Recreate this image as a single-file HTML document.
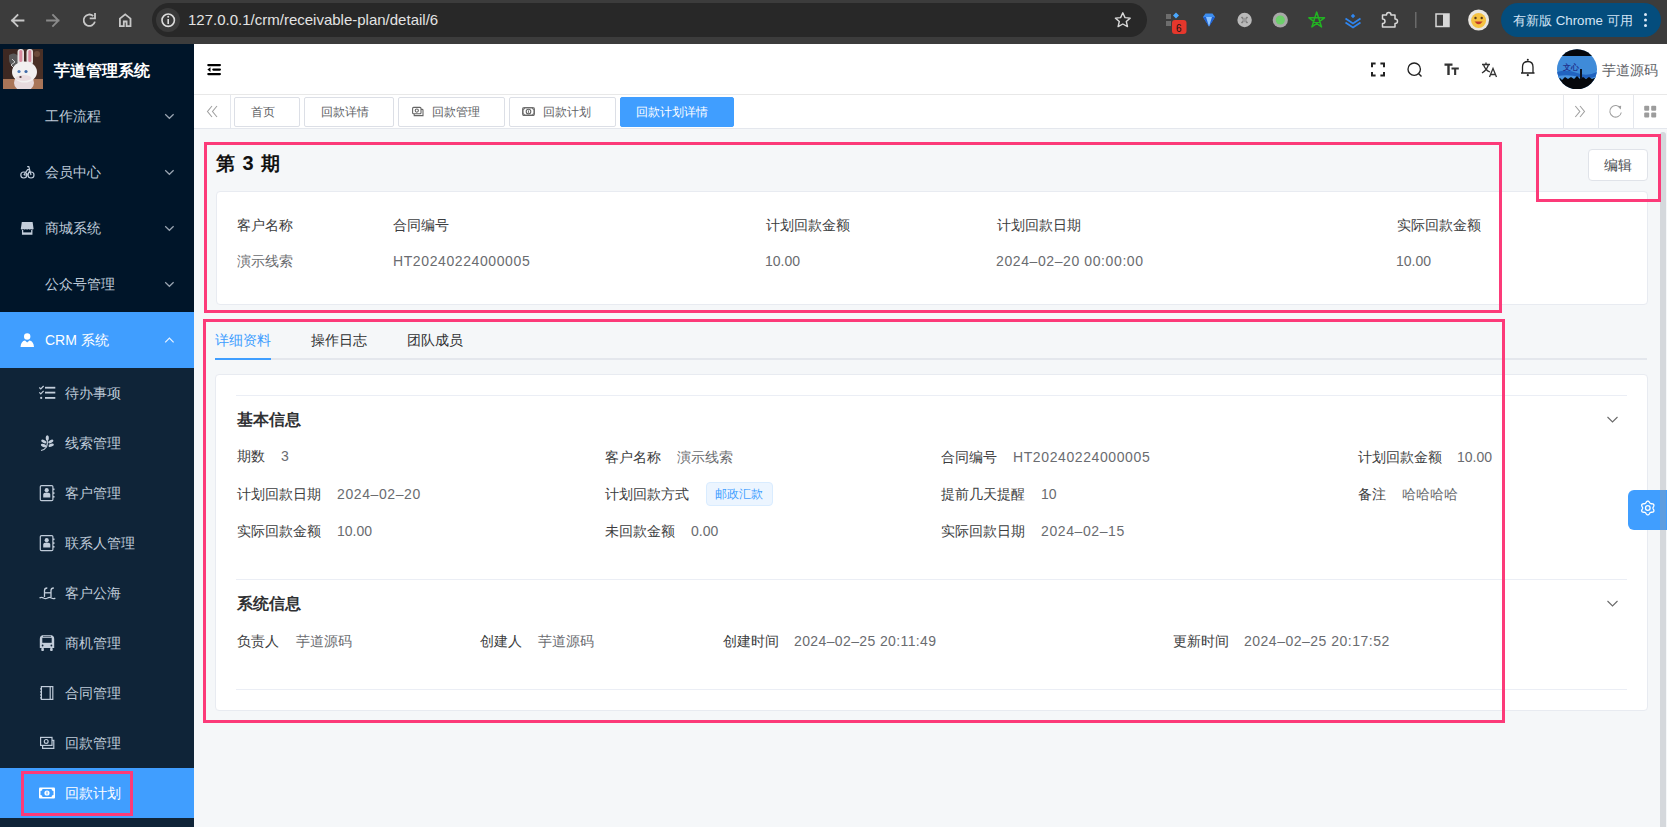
<!DOCTYPE html>
<html><head><meta charset="utf-8">
<style>
*{box-sizing:border-box;margin:0;padding:0}
html,body{width:1667px;height:827px;overflow:hidden}
body{position:relative;background:#f5f7f9;font-family:"Liberation Sans",sans-serif;font-size:14px;line-height:20px;color:#303133}
.a{position:absolute;white-space:nowrap}
svg{position:absolute;overflow:visible}
#chrome{left:0;top:0;width:1667px;height:44px;background:#3c3c3c}
#omni{left:152px;top:3px;width:995px;height:34px;border-radius:17px;background:#282828}
#side{left:0;top:44px;width:194px;height:783px;background:#001529}
#sub{left:0;top:368px;width:194px;height:459px;background:#0f2438}
#header{left:194px;top:44px;width:1473px;height:51px;background:#fff;border-bottom:1px solid #e8e8e8}
#tags{left:194px;top:95px;width:1473px;height:34px;background:#fff;border-bottom:1px solid #e4e7ed}
.pink{position:absolute;border:3px solid #fc3a79}
.card{position:absolute;background:#fff;border:1px solid #e8ebf1;border-radius:4px}
.mi{color:#bfcbd9}
.lbl{color:#3c3d40}
.val{color:#6a6c70}
.num{letter-spacing:0.6px}
.tag{position:absolute;top:97px;height:30px;border:1px solid #dcdfe6;border-radius:2px;background:#fff;color:#606266;font-size:12px}
</style></head><body>
<!-- browser chrome -->
<div id="chrome" class="a"></div>
<div id="omni" class="a"></div>
<div class="a" style="left:156px;top:8px;width:24px;height:24px;border-radius:12px;background:#3a3a3a"></div>
<svg style="left:0;top:0" width="1" height="1">
  <g fill="none" stroke="#c7c7c7" stroke-width="1.8" stroke-linecap="square">
    <path d="M12 20.5 H23.5 M17.5 15 L12 20.5 L17.5 26"/>
  </g>
  <g fill="none" stroke="#8a8a8a" stroke-width="1.8" stroke-linecap="square">
    <path d="M47 20.5 H58.5 M53 15 L58.5 20.5 L53 26"/>
  </g>
  <g fill="none" stroke="#c7c7c7" stroke-width="1.8">
    <path d="M94.9 21.6 A5.7 5.7 0 1 1 93.2 16"/>
    <path d="M90.6 18.4 H95 V14" stroke-linecap="square"/>
  </g>
  <g fill="none" stroke="#c7c7c7" stroke-width="1.8">
    <path d="M119.9 26.2 V18.6 L125.2 14.3 L130.5 18.6 V26.2 H126.6 V21.5 H123.8 V26.2 Z" stroke-linejoin="miter"/>
  </g>
  <g fill="none" stroke="#dcdcdc" stroke-width="1.6">
    <circle cx="168.2" cy="20.2" r="6.2"/>
    <path d="M168.2 19 V24"/>
  </g>
  <circle cx="168.2" cy="16.8" r="1" fill="#dcdcdc"/>
</svg>
<div class="a" style="left:188px;top:10px;font-size:15px;line-height:20px;color:#e3e3e3">127.0.0.1/crm/receivable-plan/detail/6</div>


<!-- chrome right -->
<svg style="left:0;top:0" width="1" height="1">
  <path d="M1122.8 12.8 L1125 17.6 L1130.2 18.1 L1126.3 21.5 L1127.5 26.6 L1122.8 24 L1118.1 26.6 L1119.3 21.5 L1115.4 18.1 L1120.6 17.6 Z" fill="none" stroke="#d8d8d8" stroke-width="1.4" stroke-linejoin="round"/>
  <!-- ext1 grid -->
  <g fill="#6d6d6d"><rect x="1166" y="14" width="5" height="5"/><rect x="1166" y="21" width="5" height="5"/><rect x="1173" y="21" width="5" height="5"/></g>
  <path d="M1176 12.5 L1179 15.5 L1176 18.5 L1173 15.5Z" fill="#4aa8ff"/>
  <rect x="1172" y="20" width="14.5" height="14" rx="3" fill="#e5372c"/>
  <text x="1176" y="31.5" font-size="10" font-family="Liberation Sans" fill="#111">6</text>
  <!-- diamond -->
  <path d="M1203 17 L1205.5 13.5 H1212.5 L1215 17 L1209 26.5Z" fill="#3d8ef0"/>
  <path d="M1203 17 H1215 L1209 26.5Z" fill="#1f5fcf"/>
  <path d="M1206 17 L1209 26.5 L1212 17" fill="#8cc4ff"/>
  <!-- gray circle w symbol -->
  <circle cx="1244.6" cy="20" r="7.2" fill="#b9b9b9"/>
  <path d="M1241.5 17 L1247.5 23 M1247.5 17 L1241.5 23" stroke="#7a7a7a" stroke-width="1.6"/>
  <circle cx="1244.6" cy="20" r="2.2" fill="#9a9a9a"/>
  <!-- gray circle green center -->
  <circle cx="1280.3" cy="20" r="7.6" fill="#a8a8a8"/>
  <circle cx="1280.3" cy="20" r="4.6" fill="#6ccf6a"/>
  <!-- green star -->
  <path d="M1316.70 12.10 L1321.52 26.93 L1308.90 17.77 L1324.50 17.77 L1311.88 26.93 L1316.70 12.10Z" fill="none" stroke="#22b322" stroke-width="1.5" stroke-linejoin="round"/>
  <!-- blue layers -->
  <g fill="none" stroke="#2f86f0" stroke-width="1.8">
    <path d="M1345.5 18.5 L1353 23.5 L1360.5 18.5"/>
    <path d="M1345.5 22.5 L1353 27.5 L1360.5 22.5"/>
  </g>
  <path d="M1350.8 16 L1353 13.8 L1355.2 16 L1353 18.2Z" fill="#2f86f0"/>
  <!-- puzzle -->
  <path d="M1382.5 15 H1386.5 Q1386.5 12.5 1388.8 12.5 Q1391 12.5 1391 15 H1395 V19 Q1397.5 19 1397.5 21.2 Q1397.5 23.5 1395 23.5 V27 H1382.5 V23.5 Q1385 23.5 1385 21.2 Q1385 19 1382.5 19Z" fill="none" stroke="#d8d8d8" stroke-width="1.5" stroke-linejoin="round"/>
  <rect x="1415" y="12" width="1.5" height="16" fill="#6a6a6a"/>
  <!-- side panel -->
  <rect x="1436" y="14" width="13" height="12.5" fill="none" stroke="#d8d8d8" stroke-width="1.5"/>
  <rect x="1443" y="14" width="6" height="12.5" fill="#d8d8d8"/>
  <!-- emoji avatar -->
  <circle cx="1478.6" cy="20" r="10.5" fill="#e9e6e0"/>
  <circle cx="1478.6" cy="20.5" r="7.5" fill="#f5c242"/>
  <circle cx="1475.5" cy="18" r="1.2" fill="#5a3a1a"/><circle cx="1481.7" cy="18" r="1.2" fill="#5a3a1a"/>
  <path d="M1474.5 21.5 Q1478.6 27 1482.7 21.5Z" fill="#c0392b"/>
</svg>
<div class="a" style="left:1501px;top:3px;width:160px;height:34px;border-radius:17px;background:#044d7d"></div>
<div class="a" style="left:1513px;top:11px;font-size:13.3px;line-height:20px;color:#d3e4f5">有新版 Chrome 可用</div>
<svg style="left:0;top:0" width="1" height="1"><g fill="#dbe8f7">
  <circle cx="1645.5" cy="14.5" r="1.5"/><circle cx="1645.5" cy="20" r="1.5"/><circle cx="1645.5" cy="25.5" r="1.5"/>
</g></svg>

<!-- sidebar -->
<div id="side" class="a"></div>
<div id="sub" class="a"></div>

<!-- logo -->
<svg style="left:3px;top:49px;overflow:hidden" width="40" height="40" viewBox="0 0 40 40">
  <rect width="40" height="40" fill="#3d2822"/>
  <rect x="26" y="0" width="14" height="30" fill="#4a3026"/>
  <circle cx="34" cy="5" r="3" fill="#6b4a3a"/>
  <rect y="30" width="40" height="10" fill="#a97558"/>
  <path d="M6 6 Q12 2 16 8 Q18 14 12 18 Q6 16 6 10Z" fill="#5a5a5a"/>
  <path d="M9 10 L12 13 L8 16 L11 19" stroke="#cfcfcf" stroke-width="1" fill="none"/>
  <g transform="translate(-2.5 0)"><rect x="17" y="0" width="6.5" height="16" rx="3" fill="#e6e0e0"/>
  <rect x="26" y="0" width="6.5" height="16" rx="3" fill="#e6e0e0"/>
  <rect x="18.8" y="1" width="3" height="12" rx="1.5" fill="#d98a9e"/>
  <rect x="27.8" y="1" width="3" height="12" rx="1.5" fill="#d98a9e"/>
  <ellipse cx="23.5" cy="34" rx="10" ry="8" fill="#e7dadd"/>
  <ellipse cx="24" cy="23" rx="12.5" ry="10.5" fill="#f2f0f0"/>
  <ellipse cx="23" cy="29" rx="8" ry="3" fill="#eadde0"/>
  <circle cx="18.5" cy="22.5" r="1.6" fill="#4b78b8"/>
  <circle cx="25.5" cy="22.5" r="1.6" fill="#3d6aa8"/>
  <ellipse cx="20" cy="28" rx="1.2" ry="1" fill="#5a4040"/></g>
</svg>
<div class="a" style="left:54px;top:61px;font-size:16px;font-weight:bold;color:#fff">芋道管理系统</div>

<!-- top level menu -->
<div class="a mi" style="left:45px;top:106px">工作流程</div>
<div class="a mi" style="left:45px;top:162px">会员中心</div>
<div class="a mi" style="left:45px;top:218px">商城系统</div>
<div class="a mi" style="left:45px;top:274px">公众号管理</div>
<div class="a" style="left:0;top:312px;width:194px;height:56px;background:#409eff"></div>
<div class="a" style="left:45px;top:330px;color:#fff">CRM 系统</div>
<svg style="left:0;top:0" width="1" height="1">
  <g fill="none" stroke="#9aa5b2" stroke-width="1.2">
    <path d="M165.2 114.3 L169.4 118.3 L173.6 114.3"/>
    <path d="M165.2 170.3 L169.4 174.3 L173.6 170.3"/>
    <path d="M165.2 226.3 L169.4 230.3 L173.6 226.3"/>
    <path d="M165.2 282.3 L169.4 286.3 L173.6 282.3"/>
  </g>
  <path d="M165.2 342.3 L169.4 338 L173.6 342.3" fill="none" stroke="#e8f2ff" stroke-width="1.2"/>
  <!-- bike icon -->
  <g fill="none" stroke="#bfcbd9" stroke-width="1.2">
    <circle cx="23.8" cy="175" r="3"/><circle cx="31" cy="175" r="3"/>
    <path d="M23.8 175 H27.4 L30 170.2 M23.8 175 L27.6 169.6 H30.2 M31 175 L28.8 166.6 H27.2"/>
  </g>
  <!-- shop icon -->
  <path d="M21.8 222 H32.6 L33.6 229 Q32.3 230.2 31 229 Q29.7 230.2 28.4 229 Q27.2 230.2 25.9 229 Q24.6 230.2 23.3 229 Q22 230.2 20.8 229Z" fill="#c3cedb"/>
  <path d="M22.6 230 V234 H31.8 V230" fill="none" stroke="#c3cedb" stroke-width="1.3"/>
  <rect x="22.6" y="232.4" width="9.2" height="1.6" fill="#c3cedb"/>
  <!-- user icon -->
  <circle cx="27.2" cy="336.5" r="3.2" fill="#fff"/>
  <path d="M20.5 347 Q21 341 25 340.5 L27.2 342.5 L29.4 340.5 Q33.5 341 34 347 Z" fill="#fff"/>
</svg>

<!-- sub menu -->
<div class="a mi" style="left:65px;top:383px">待办事项</div>
<div class="a mi" style="left:65px;top:433px">线索管理</div>
<div class="a mi" style="left:65px;top:483px">客户管理</div>
<div class="a mi" style="left:65px;top:533px">联系人管理</div>
<div class="a mi" style="left:65px;top:583px">客户公海</div>
<div class="a mi" style="left:65px;top:633px">商机管理</div>
<div class="a mi" style="left:65px;top:683px">合同管理</div>
<div class="a mi" style="left:65px;top:733px">回款管理</div>
<div class="a" style="left:0;top:768px;width:194px;height:50px;background:#409eff"></div>
<div class="a" style="left:65px;top:783px;color:#fff">回款计划</div>
<svg style="left:0;top:0" width="1" height="1">
  <g fill="#c3cedb">
    <rect x="45" y="386.8" width="10.3" height="1.8"/><rect x="45" y="391.7" width="10.3" height="1.8"/><rect x="45" y="397" width="10.3" height="1.8"/>
    <circle cx="41.2" cy="397.9" r="1.1"/>
  </g>
  <g fill="none" stroke="#c3cedb" stroke-width="1.2">
    <path d="M39.3 387.5 L40.8 389 L43.6 386"/>
    <path d="M39.3 392.3 L40.8 393.8 L43.6 390.8"/>
  </g>
  <!-- leaf -->
  <g fill="#c3cedb">
    <ellipse cx="47.3" cy="438" rx="1.6" ry="2.8"/>
    <ellipse cx="43.8" cy="441.5" rx="2.8" ry="1.5" transform="rotate(25 43.8 441.5)"/>
    <ellipse cx="50.8" cy="441.5" rx="2.8" ry="1.5" transform="rotate(-25 50.8 441.5)"/>
    <ellipse cx="43.5" cy="445.5" rx="2.8" ry="1.5" transform="rotate(20 43.5 445.5)"/>
    <ellipse cx="51.2" cy="445.2" rx="2.8" ry="1.5" transform="rotate(-20 51.2 445.2)"/>
  </g>
  <path d="M47.3 439 Q47.8 444 46.5 447 Q44.5 450 41 450.5" fill="none" stroke="#c3cedb" stroke-width="1.1"/>
  <!-- contact cards -->
  <g fill="none" stroke="#bfcbd9" stroke-width="1.2">
    <rect x="40.3" y="485.6" width="12.6" height="15" rx="1.2"/>
    <rect x="40.3" y="535.6" width="12.6" height="15" rx="1.2"/>
  </g>
  <g fill="#c3cedb">
    <circle cx="46.7" cy="490.2" r="2.1"/><path d="M43.2 497.6 V494.8 Q43.2 492.6 46.7 492.6 Q50.3 492.6 50.3 494.8 V497.6Z"/>
    <circle cx="46.7" cy="540.2" r="2.1"/><path d="M43.2 547.6 V544.8 Q43.2 542.6 46.7 542.6 Q50.3 542.6 50.3 544.8 V547.6Z"/>
    <rect x="53" y="488.5" width="1.5" height="1.6"/><rect x="53" y="492.3" width="1.5" height="1.6"/><rect x="53" y="496" width="1.5" height="1.6"/>
    <rect x="53" y="538.5" width="1.5" height="1.6"/><rect x="53" y="542.3" width="1.5" height="1.6"/><rect x="53" y="546" width="1.5" height="1.6"/>
  </g>
  <!-- sea -->
  <g fill="none" stroke="#c3cedb" stroke-width="1.3">
    <path d="M44.5 597 V590.5 Q44.5 588 47.3 588"/>
    <path d="M51 597 V590.5 Q51 588 53.8 588"/>
    <path d="M44.5 592.8 H51"/>
    <path d="M39.5 598 Q41.5 596.6 43.5 598 Q45.5 599.4 47.5 598 Q49.5 596.6 51.5 598 Q53.5 599.4 55.3 598"/>
  </g>
  <!-- bus -->
  <path d="M39.8 639 Q39.8 635 44 635 H50 Q54.2 635 54.2 639 V648 H39.8Z" fill="#c3cedb"/>
  <rect x="41.3" y="648" width="2.6" height="3" rx="0.8" fill="#c3cedb"/>
  <rect x="50.1" y="648" width="2.6" height="3" rx="0.8" fill="#c3cedb"/>
  <rect x="42.3" y="637.8" width="9.4" height="5" fill="#0f2438"/>
  <rect x="43" y="635.8" width="8" height="0.8" fill="#0f2438"/>
  <circle cx="42.6" cy="645.5" r="0.9" fill="#0f2438"/><circle cx="51.4" cy="645.5" r="0.9" fill="#0f2438"/>
  <!-- notebook -->
  <g fill="none" stroke="#bfcbd9" stroke-width="1.2">
    <rect x="41.4" y="686.6" width="11.4" height="12.8"/>
    <path d="M50.2 686.6 V699.4"/>
  </g>
  <g fill="#bfcbd9"><rect x="40" y="688.3" width="2" height="1.2"/><rect x="40" y="691.3" width="2" height="1.2"/><rect x="40" y="694.3" width="2" height="1.2"/><rect x="40" y="697.3" width="2" height="1.2"/></g>
  <!-- money stack -->
  <g fill="none" stroke="#bfcbd9" stroke-width="1.2">
    <rect x="40.6" y="737.4" width="11.4" height="8"/>
    <path d="M42.6 745.4 V748.4 H53.8 V740.4 H52"/>
    <circle cx="46.2" cy="741.4" r="1.9"/>
  </g>
  <!-- money active -->
  <rect x="39" y="787.5" width="16" height="11" rx="1" fill="#fff"/>
  <path d="M40.5 791 Q42.5 791 42.5 789 H51.5 Q51.5 791 53.5 791 V795 Q51.5 795 51.5 797 H42.5 Q42.5 795 40.5 795Z" fill="#409eff"/>
  <circle cx="47" cy="793" r="2.6" fill="#fff"/>
  <path d="M47 791.6 V794.4" stroke="#409eff" stroke-width="0.9"/>
</svg>

<!-- header -->
<div id="header" class="a"></div>
<svg style="left:0;top:0" width="1" height="1">
  <g fill="#000">
    <rect x="207.2" y="64" width="13.8" height="2.2" rx="1.1"/>
    <rect x="212.2" y="68.5" width="8.8" height="2.2" rx="1.1"/>
    <rect x="207.2" y="73" width="13.8" height="2.2" rx="1.1"/>
    <path d="M207.4 69.6 L210.5 67.2 V72Z"/>
  </g>
  <!-- fullscreen -->
  <g fill="none" stroke="#222" stroke-width="2">
    <path d="M1372 67.2 V63.6 H1375.6 M1380.4 63.6 H1384 V67.2 M1384 72 V75.6 H1380.4 M1375.6 75.6 H1372 V72"/>
  </g>
  <!-- search -->
  <g fill="none" stroke="#222" stroke-width="1.35">
    <circle cx="1414.2" cy="69.2" r="6.2"/>
    <path d="M1418.5 73.5 L1421.5 76.5"/>
  </g>
  <!-- Tt -->
  <g fill="#333">
    <path d="M1444.5 63.5 H1452.5 V65.8 H1449.7 V75 H1447.3 V65.8 H1444.5Z"/>
    <path d="M1451.5 67.5 H1458.8 V69.5 H1456.2 V75 H1454.1 V69.5 H1451.5Z"/>
  </g>
  <!-- translate -->
  <g fill="none" stroke="#333" stroke-width="1.3">
    <path d="M1482 64.5 H1490 M1486 62.5 V64.5 M1483.5 64.5 Q1485 70 1490 72 M1488.5 64.5 Q1487 70 1482 73"/>
    <path d="M1489.5 77 L1493 68.5 L1496.5 77 M1490.7 74.5 H1495.3"/>
  </g>
  <!-- bell -->
  <g fill="none" stroke="#222" stroke-width="1.3">
    <path d="M1521 73 H1534.5 M1522.5 73 V67 Q1522.5 61.5 1527.8 61.5 Q1533 61.5 1533 67 V73"/>
  </g>
  <circle cx="1527.8" cy="59.8" r="1" fill="#222"/>
  <circle cx="1527.8" cy="75.2" r="1.1" fill="#222"/>
</svg>
<!-- avatar -->
<svg style="left:1557px;top:49px" width="40" height="40" viewBox="0 0 40 40">
  <defs><clipPath id="avc"><circle cx="20" cy="20.3" r="20"/></clipPath></defs>
  <g clip-path="url(#avc)">
    <rect width="40" height="40" fill="#3f8bd9"/>
    <rect width="40" height="7" fill="#05070c"/>
    <path d="M0 23 Q10 20 20 24 T40 23 V30 H0Z" fill="#2163bf"/>
    <path d="M0 27 Q12 25 22 28 T40 27 V32 H0Z" fill="#4a95e0"/>
    <path d="M0 31 L3 29 L5 31 L8 28 L11 30 L14 28 L17 30 L20 27 L23 30 L26 28 L29 30 L32 28 L35 30 L40 28 V40 H0Z" fill="#06080c"/>
    <rect x="23" y="20" width="2" height="10" fill="#0a1222"/>
    <text x="5.5" y="21" font-size="7.5" fill="#22348f" font-weight="bold">文心</text>
  </g>
</svg>
<div class="a" style="left:1602px;top:60px;color:#606266">芋道源码</div>

<!-- tags view -->
<div id="tags" class="a"></div>
<div class="a" style="left:230px;top:95px;width:1px;height:33px;background:#e4e7ed"></div>
<div class="a" style="left:1563px;top:95px;width:1px;height:33px;background:#e4e7ed"></div>
<div class="a" style="left:1598px;top:95px;width:1px;height:33px;background:#e4e7ed"></div>
<div class="a" style="left:1633px;top:95px;width:1px;height:33px;background:#e4e7ed"></div>
<svg style="left:0;top:0" width="1" height="1">
  <g fill="none" stroke="#a0a0a0" stroke-width="1.1">
    <path d="M212 106 L207.5 111.5 L212 117 M217 106 L212.5 111.5 L217 117"/>
    <path d="M1575.3 106 L1579.8 111.5 L1575.3 117 M1580 106 L1584.5 111.5 L1580 117"/>
    <path d="M1620.6 108.3 A5.8 5.8 0 1 0 1621.3 112.5"/>
  </g>
  <path d="M1617.5 106.3 L1621.2 105.8 L1620.8 109.5Z" fill="#a0a0a0"/>
  <g fill="#9c9c9c">
    <rect x="1644.2" y="105.8" width="5" height="5" rx="1"/><rect x="1651.2" y="105.8" width="5" height="5" rx="1"/>
    <rect x="1644.2" y="112.6" width="5" height="5" rx="1"/><rect x="1651.2" y="112.6" width="5" height="5" rx="1"/>
  </g>
</svg>
<div class="tag a" style="left:234px;width:66px"><span class="a" style="left:16px;top:4px">首页</span></div>
<div class="tag a" style="left:304px;width:90px"><span class="a" style="left:16px;top:4px">回款详情</span></div>
<div class="tag a" style="left:398px;width:107px"><span class="a" style="left:33px;top:4px">回款管理</span></div>
<div class="tag a" style="left:509px;width:107px"><span class="a" style="left:33px;top:4px">回款计划</span></div>
<div class="tag a" style="left:620px;width:114px;background:#409eff;border-color:#409eff;color:#fff"><span class="a" style="left:15px;top:4px">回款计划详情</span></div>
<svg style="left:0;top:0" width="1" height="1">
  <g fill="none" stroke="#666" stroke-width="1.1">
    <rect x="412.6" y="107.4" width="8.4" height="6.4" rx="1"/>
    <path d="M414.2 114 V115.6 H423 V110.2 Q423 109.4 422.2 109.4 H421"/>
    <circle cx="416.8" cy="110.6" r="1.6"/>
    <path d="M522.8 109.4 Q524.2 109.4 524.6 107.8 H532.4 Q532.8 109.4 534.2 109.4 V113.8 Q532.8 113.8 532.4 115.4 H524.6 Q524.2 113.8 522.8 113.8Z"/>
    <rect x="522.8" y="107.8" width="11.4" height="7.6" rx="0.6"/>
  </g>
  <circle cx="528.5" cy="111.6" r="2.3" fill="none" stroke="#666" stroke-width="1.1"/>
  <path d="M528.5 110.4 V112.8" stroke="#666" stroke-width="0.9"/>
</svg>

<!-- content -->
<div class="a" style="left:215.8px;top:153.5px;font-size:18.5px;font-weight:bold;color:#111">第</div><div class="a" style="left:242.5px;top:153px;font-size:20px;font-weight:bold;color:#111">3</div><div class="a" style="left:261px;top:153.5px;font-size:18.5px;font-weight:bold;color:#111">期</div>
<div class="a" style="left:1588px;top:149px;width:60px;height:32px;background:#fff;border:1px solid #e0e3e9;border-radius:4px"></div>
<div class="a" style="left:1604px;top:155px;color:#4a4c50;font-weight:500">编辑</div>

<div class="card" style="left:216px;top:191px;width:1432px;height:114px"></div>
<div class="a lbl" style="left:237px;top:215px">客户名称</div>
<div class="a lbl" style="left:393px;top:215px">合同编号</div>
<div class="a lbl" style="left:766px;top:215px">计划回款金额</div>
<div class="a lbl" style="left:997px;top:215px">计划回款日期</div>
<div class="a lbl" style="left:1397px;top:215px">实际回款金额</div>
<div class="a val" style="left:237px;top:251px">演示线索</div>
<div class="a val num" style="left:393px;top:251px">HT20240224000005</div>
<div class="a val" style="left:765px;top:251px">10.00</div>
<div class="a val num" style="left:996px;top:251px">2024–02–20 00:00:00</div>
<div class="a val" style="left:1396px;top:251px">10.00</div>

<!-- tabs -->
<div class="a" style="left:215px;top:330px;color:#409eff;font-weight:500">详细资料</div>
<div class="a" style="left:311px;top:330px;color:#303133;font-weight:500">操作日志</div>
<div class="a" style="left:407px;top:330px;color:#303133;font-weight:500">团队成员</div>
<div class="a" style="left:215px;top:358px;width:1432px;height:2px;background:#e4e7ed"></div>
<div class="a" style="left:215px;top:358px;width:56px;height:2px;background:#409eff"></div>

<div class="card" style="left:215px;top:374px;width:1433px;height:337px"></div>
<div class="a" style="left:236px;top:395px;width:1391px;height:1px;background:#ebeef5"></div>
<div class="a" style="left:237px;top:410px;font-size:16px;font-weight:bold;color:#303133">基本信息</div>
<svg style="left:0;top:0" width="1" height="1"><g fill="none" stroke="#6a6a6a" stroke-width="1.1">
  <path d="M1607.5 417 L1612.5 422 L1617.5 417"/>
  <path d="M1607.5 601 L1612.5 606 L1617.5 601"/>
</g></svg>

<div class="a lbl" style="left:237px;top:446px">期数</div>
<div class="a val num" style="left:281px;top:446px">3</div>
<div class="a lbl" style="left:605px;top:447px">客户名称</div>
<div class="a val" style="left:677px;top:447px">演示线索</div>
<div class="a lbl" style="left:941px;top:447px">合同编号</div>
<div class="a val num" style="left:1013px;top:447px">HT20240224000005</div>
<div class="a lbl" style="left:1358px;top:447px">计划回款金额</div>
<div class="a val" style="left:1457px;top:447px">10.00</div>

<div class="a lbl" style="left:237px;top:484px">计划回款日期</div>
<div class="a val num" style="left:337px;top:484px">2024–02–20</div>
<div class="a lbl" style="left:605px;top:484px">计划回款方式</div>
<div class="a" style="left:706px;top:482px;width:67px;height:24px;background:#ecf5ff;border:1px solid #d9ecff;border-radius:4px"></div>
<div class="a" style="left:715px;top:484px;font-size:12px;color:#409eff">邮政汇款</div>
<div class="a lbl" style="left:941px;top:484px">提前几天提醒</div>
<div class="a val" style="left:1041px;top:484px">10</div>
<div class="a lbl" style="left:1358px;top:484px">备注</div>
<div class="a val" style="left:1402px;top:484px">哈哈哈哈</div>

<div class="a lbl" style="left:237px;top:521px">实际回款金额</div>
<div class="a val" style="left:337px;top:521px">10.00</div>
<div class="a lbl" style="left:605px;top:521px">未回款金额</div>
<div class="a val" style="left:691px;top:521px">0.00</div>
<div class="a lbl" style="left:941px;top:521px">实际回款日期</div>
<div class="a val num" style="left:1041px;top:521px">2024–02–15</div>

<div class="a" style="left:236px;top:579px;width:1391px;height:1px;background:#ebeef5"></div>
<div class="a" style="left:237px;top:594px;font-size:16px;font-weight:bold;color:#303133">系统信息</div>
<div class="a lbl" style="left:237px;top:631px">负责人</div>
<div class="a val" style="left:296px;top:631px">芋道源码</div>
<div class="a lbl" style="left:480px;top:631px">创建人</div>
<div class="a val" style="left:538px;top:631px">芋道源码</div>
<div class="a lbl" style="left:723px;top:631px">创建时间</div>
<div class="a val num" style="left:794px;top:631px;letter-spacing:0.38px">2024–02–25 20:11:49</div>
<div class="a lbl" style="left:1173px;top:631px">更新时间</div>
<div class="a val num" style="left:1244px;top:631px;letter-spacing:0.5px">2024–02–25 20:17:52</div>
<div class="a" style="left:236px;top:689px;width:1391px;height:1px;background:#ebeef5"></div>

<!-- scrollbar -->
<div class="a" style="left:1660px;top:132px;width:6px;height:695px;background:#d5d8dc;border-radius:3px 3px 0 0"></div>
<!-- settings float -->
<div class="a" style="left:1628px;top:490px;width:39px;height:40px;background:#409eff;border-radius:6px 0 0 6px"></div>
<div class="a" style="left:1660px;top:490px;width:6px;height:40px;background:#5f9ee0"></div>
<svg style="left:0;top:0" width="1" height="1"><g fill="none" stroke="#fff" stroke-width="1.3">
  <path d="M1652.95 508.00 L1652.98 508.27 L1653.08 508.56 L1653.23 508.86 L1653.41 509.19 L1653.60 509.55 L1653.76 509.94 L1653.87 510.33 L1653.91 510.72 L1653.87 511.09 L1653.73 511.43 L1653.51 511.71 L1653.21 511.93 L1652.85 512.09 L1652.45 512.19 L1652.04 512.24 L1651.64 512.26 L1651.26 512.27 L1650.92 512.30 L1650.63 512.35 L1650.38 512.46 L1650.16 512.63 L1649.96 512.85 L1649.77 513.14 L1649.57 513.46 L1649.35 513.80 L1649.10 514.13 L1648.82 514.42 L1648.50 514.65 L1648.16 514.80 L1647.80 514.85 L1647.44 514.80 L1647.10 514.65 L1646.78 514.42 L1646.50 514.13 L1646.25 513.80 L1646.03 513.46 L1645.83 513.14 L1645.64 512.85 L1645.44 512.63 L1645.22 512.46 L1644.97 512.35 L1644.68 512.30 L1644.34 512.27 L1643.96 512.26 L1643.56 512.24 L1643.15 512.19 L1642.75 512.09 L1642.39 511.93 L1642.09 511.71 L1641.87 511.43 L1641.73 511.09 L1641.69 510.72 L1641.73 510.33 L1641.84 509.94 L1642.00 509.55 L1642.19 509.19 L1642.37 508.86 L1642.52 508.56 L1642.62 508.27 L1642.65 508.00 L1642.62 507.73 L1642.52 507.44 L1642.37 507.14 L1642.19 506.81 L1642.00 506.45 L1641.84 506.06 L1641.73 505.67 L1641.69 505.28 L1641.73 504.91 L1641.87 504.57 L1642.09 504.29 L1642.39 504.07 L1642.75 503.91 L1643.15 503.81 L1643.56 503.76 L1643.96 503.74 L1644.34 503.73 L1644.68 503.70 L1644.97 503.65 L1645.22 503.54 L1645.44 503.37 L1645.64 503.15 L1645.83 502.86 L1646.03 502.54 L1646.25 502.20 L1646.50 501.87 L1646.78 501.58 L1647.10 501.35 L1647.44 501.20 L1647.80 501.15 L1648.16 501.20 L1648.50 501.35 L1648.82 501.58 L1649.10 501.87 L1649.35 502.20 L1649.57 502.54 L1649.77 502.86 L1649.96 503.15 L1650.16 503.37 L1650.38 503.54 L1650.63 503.65 L1650.92 503.70 L1651.26 503.73 L1651.64 503.74 L1652.04 503.76 L1652.45 503.81 L1652.85 503.91 L1653.21 504.07 L1653.51 504.29 L1653.73 504.57 L1653.87 504.91 L1653.91 505.28 L1653.87 505.67 L1653.76 506.06 L1653.60 506.45 L1653.41 506.81 L1653.23 507.14 L1653.08 507.44 L1652.98 507.73Z"/>
  <circle cx="1647.8" cy="508" r="2.3"/>
</g></svg>

<div class="pink" style="left:204px;top:142px;width:1298px;height:171px"></div>
<div class="pink" style="left:203px;top:319px;width:1302px;height:404px"></div>
<div class="pink" style="left:1536px;top:134px;width:125px;height:68px"></div>
<div class="pink" style="left:21px;top:771px;width:112px;height:45px"></div>
</body></html>
